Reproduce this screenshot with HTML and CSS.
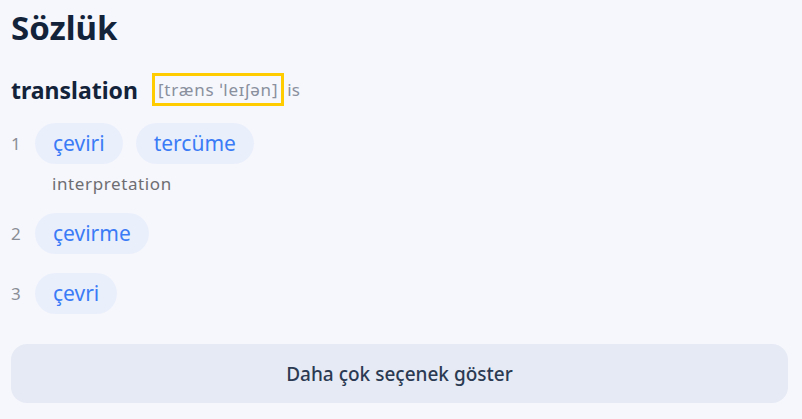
FILE: index.html
```html
<!DOCTYPE html>
<html lang="tr">
<head>
    <meta charset="UTF-8">
    <meta name="viewport" content="width=device-width, initial-scale=1.0">
    <title>Sözlük</title>
    <link rel="stylesheet" href="styles.css">
</head>
<body>
    <div class="dict">
        <h1 class="dict-title">Sözlük</h1>
        <div class="entry">
            <span class="word">translation</span>
            <span class="transcription">[træns ˈleɪʃən]</span>
            <span class="pos">is</span>
        </div>
        <ol class="senses">
            <li class="sense">
                <span class="num">1</span>
                <div class="sense-body">
                    <div class="chips">
                        <span class="chip">çeviri</span>
                        <span class="chip">tercüme</span>
                    </div>
                    <div class="note">interpretation</div>
                </div>
            </li>
            <li class="sense">
                <span class="num">2</span>
                <div class="sense-body">
                    <div class="chips">
                        <span class="chip">çevirme</span>
                    </div>
                </div>
            </li>
            <li class="sense">
                <span class="num">3</span>
                <div class="sense-body">
                    <div class="chips">
                        <span class="chip">çevri</span>
                    </div>
                </div>
            </li>
        </ol>
        <button class="more">Daha çok seçenek göster</button>
    </div>
</body>
</html>
```

FILE: styles.css
```css
body {
    margin: 0;
    background-color: #f6f7fc;
    font-family: "Noto Sans", "Open Sans", sans-serif;
}
.dict {
    padding: 8px 14px 0 11px;
}
.dict-title {
    margin: 0;
    font-size: 33px;
    font-weight: 700;
    color: #13233a;
    line-height: 40px;
}
.entry {
    display: flex;
    align-items: center;
    margin-top: 25px;
}
.word {
    font-size: 23px;
    font-weight: 700;
    color: #13233a;
    margin-right: 14px;
}
.transcription {
    border: 3px solid #ffcc00;
    padding: 2px 3px;
    font-size: 17px;
    letter-spacing: 0.8px;
    color: #8a909e;
    line-height: 23px;
}
.pos {
    margin-left: 3px;
    font-size: 17px;
    color: #8a909e;
}
.senses {
    list-style: none;
    margin: 17px 0 0;
    padding: 0;
}
.sense {
    display: flex;
    align-items: flex-start;
    margin-bottom: 19px;
}
.sense:last-child {
    margin-bottom: 0;
}
.num {
    width: 24px;
    line-height: 41px;
    font-size: 17px;
    color: #8a8e96;
}
.chips {
    display: flex;
    gap: 13px;
}
.chip {
    background-color: #eaeffc;
    color: #3b7cf6;
    font-size: 21px;
    line-height: 41px;
    padding: 0 18px;
    border-radius: 21px;
}
.note {
    margin: 10px 0 0 17px;
    font-size: 17px;
    letter-spacing: 0.6px;
    line-height: 20px;
    color: #6e6e72;
}
.more {
    display: block;
    width: 100%;
    height: 59px;
    margin-top: 30px;
    border: none;
    border-radius: 16px;
    background-color: #e6eaf4;
    color: #2b3a52;
    font-family: "Noto Sans", "Open Sans", sans-serif;
    font-size: 19px;
    font-weight: 500;
    cursor: pointer;
}
```
